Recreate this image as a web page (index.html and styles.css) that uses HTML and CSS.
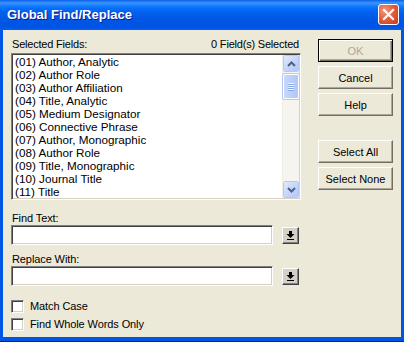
FILE: index.html
```html
<!DOCTYPE html>
<html lang="en">
<head>
  <meta charset="UTF-8" />
  <title>Global Find/Replace</title>
  <link rel="stylesheet" href="styles.css">
</head>
<body>
  <div class="window">
    <div class="titlebar">
      <span class="title">Global Find/Replace</span>
      <button class="close-btn" aria-label="Close">
        <svg width="13" height="13" viewBox="0 0 13 13">
          <path d="M2 2 L11 11 M11 2 L2 11" stroke="#fff" stroke-width="2.2" stroke-linecap="square"/>
        </svg>
      </button>
    </div>

    <div class="frame">
      <div class="content">
        <div class="left-col">
          <div class="list-header">
            <span>Selected Fields:</span>
            <span>0 Field(s) Selected</span>
          </div>

          <div class="listbox">
            <ul class="items">
              <li>(01) Author, Analytic</li>
              <li>(02) Author Role</li>
              <li>(03) Author Affiliation</li>
              <li>(04) Title, Analytic</li>
              <li>(05) Medium Designator</li>
              <li>(06) Connective Phrase</li>
              <li>(07) Author, Monographic</li>
              <li>(08) Author Role</li>
              <li>(09) Title, Monographic</li>
              <li>(10) Journal Title</li>
              <li>(11) Title</li>
            </ul>
            <div class="scrollbar">
              <div class="sb-btn">
                <svg width="9" height="6" viewBox="0 0 9 6"><polyline points="1,5 4.5,1.5 8,5" fill="none" stroke="#4d6185" stroke-width="2"/></svg>
              </div>
              <div class="sb-track">
                <div class="sb-thumb">
                  <span></span><span></span><span></span><span></span>
                </div>
              </div>
              <div class="sb-btn">
                <svg width="9" height="6" viewBox="0 0 9 6"><polyline points="1,1 4.5,4.5 8,1" fill="none" stroke="#4d6185" stroke-width="2"/></svg>
              </div>
            </div>
          </div>

          <label class="field-label">Find Text:</label>
          <div class="input-row">
            <div class="text-input"></div>
            <button class="drop-btn">
              <svg width="9" height="9" viewBox="0 0 9 9">
                <rect x="3" y="0" width="3" height="3" fill="#000"/>
                <polygon points="0.5,3 8.5,3 4.5,7" fill="#000"/>
                <rect x="1" y="8" width="7" height="1" fill="#000"/>
              </svg>
            </button>
          </div>

          <label class="field-label">Replace With:</label>
          <div class="input-row">
            <div class="text-input"></div>
            <button class="drop-btn">
              <svg width="9" height="9" viewBox="0 0 9 9">
                <rect x="3" y="0" width="3" height="3" fill="#000"/>
                <polygon points="0.5,3 8.5,3 4.5,7" fill="#000"/>
                <rect x="1" y="8" width="7" height="1" fill="#000"/>
              </svg>
            </button>
          </div>

          <div class="checks">
            <label class="check"><span class="box"></span>Match Case</label>
            <label class="check"><span class="box"></span>Find Whole Words Only</label>
          </div>
        </div>

        <div class="right-col">
          <button class="btn default" disabled>OK</button>
          <button class="btn">Cancel</button>
          <button class="btn">Help</button>
          <button class="btn spaced">Select All</button>
          <button class="btn">Select None</button>
        </div>
      </div>
    </div>
  </div>
</body>
</html>
```

FILE: styles.css
```css
* {
  margin: 0;
  padding: 0;
  box-sizing: border-box;
}

body {
  font-family: "Liberation Sans", Arial, sans-serif;
  font-size: 11px;
  color: #000;
  background: #ece9d8;
}

.window {
  width: 404px;
  height: 342px;
  display: flex;
  flex-direction: column;
  background: #0055e5;
}

/* title bar */
.titlebar {
  height: 30px;
  flex: none;
  display: flex;
  align-items: center;
  justify-content: space-between;
  padding: 0 5px 1px 7px;
  background: linear-gradient(180deg, #0a5fe8 0%, #3d95ff 10%, #1a80ff 18%, #046ffb 28%, #0260ee 42%, #0057e5 62%, #0054e3 86%, #0057ea 94%, #0464f4 100%);
}

.title {
  color: #fff;
  font-weight: bold;
  font-size: 13px;
  text-shadow: 1px 1px 0 #0a1e8c;
}

.close-btn {
  width: 21px;
  height: 21px;
  border: 1px solid #fff;
  border-radius: 3px;
  background: radial-gradient(circle at 30% 30%, #f09a80 0%, #e4603f 45%, #c8381a 100%);
  display: flex;
  align-items: center;
  justify-content: center;
}

/* frame around the client area */
.frame {
  flex: 1;
  display: flex;
  padding: 0 3px 4px 3px;
  background: #0055e5;
  border-bottom: 1px solid #001ea0;
}

.content {
  flex: 1;
  display: flex;
  gap: 17px;
  padding: 8px 8px 0 8px;
  background: #ece9d8;
}

.left-col {
  width: 290px;
  display: flex;
  flex-direction: column;
}

.list-header {
  display: flex;
  justify-content: space-between;
  line-height: 13px;
  letter-spacing: -0.2px;
  padding: 0 2px 0 1px;
  margin-bottom: 2px;
}

/* list box */
.listbox {
  height: 147px;
  display: flex;
  background: #fff;
  border: 1px solid;
  border-color: #808080 #fff #fff #808080;
  box-shadow: inset 1px 1px 0 #404040, inset -1px -1px 0 #d4d0c8;
  padding: 1px;
}

.items {
  flex: 1;
  list-style: none;
  padding-left: 2px;
  font-size: 11.7px;
  line-height: 13px;
  overflow: hidden;
}

.scrollbar {
  width: 17px;
  display: flex;
  flex-direction: column;
  background: #f5f4ef;
  border-left: 1px solid #eeede5;
}

.sb-btn {
  height: 17px;
  display: flex;
  align-items: center;
  justify-content: center;
  background: linear-gradient(135deg, #e1eafe 0%, #c1d3fb 60%, #b4c8f6 100%);
  border: 1px solid #fff;
  border-radius: 2px;
  outline: 1px solid #b6c9f4;
  outline-offset: -1px;
}

.sb-track {
  flex: 1;
  padding-top: 2px;
}

.sb-thumb {
  height: 25px;
  display: flex;
  flex-direction: column;
  align-items: center;
  justify-content: center;
  gap: 1px;
  background: linear-gradient(90deg, #c9d8fc 0%, #bccffb 50%, #b2c7f6 100%);
  border: 1px solid #fff;
  border-radius: 2px;
  box-shadow: 0 0 0 1px #b6c9f4;
}

.sb-thumb span {
  width: 6px;
  height: 1px;
  background: #eef3fe;
  box-shadow: 0 1px 0 #8caae6;
}

/* text inputs */
.field-label {
  line-height: 13px;
  letter-spacing: -0.1px;
  margin-top: 12px;
  padding-left: 1px;
}

.input-row + .field-label {
  margin-top: 8px;
}

.input-row {
  display: flex;
  align-items: center;
  gap: 9px;
}

.text-input {
  width: 262px;
  height: 20px;
  background: #fff;
  border: 1px solid;
  border-color: #808080 #fff #fff #808080;
  box-shadow: inset 1px 1px 0 #404040, inset -1px -1px 0 #d4d0c8;
}

.drop-btn {
  width: 17px;
  height: 17px;
  display: flex;
  align-items: center;
  justify-content: center;
  background: #d4d0c8;
  border: 1px solid;
  border-color: #fff #404040 #404040 #fff;
  box-shadow: inset -1px -1px 0 #808080;
}

/* checkboxes */
.checks {
  display: flex;
  flex-direction: column;
  gap: 5px;
  margin-top: 14px;
}

.check {
  display: flex;
  align-items: center;
  gap: 6px;
  height: 13px;
  line-height: 13px;
  letter-spacing: -0.1px;
}

.box {
  width: 13px;
  height: 13px;
  background: #fff;
  border: 1px solid;
  border-color: #808080 #fff #fff #808080;
  box-shadow: inset 1px 1px 0 #404040, inset -1px -1px 0 #d4d0c8;
}

/* push buttons */
.right-col {
  width: 75px;
  display: flex;
  flex-direction: column;
  gap: 4px;
  padding-top: 1px;
}

.btn {
  width: 75px;
  height: 23px;
  font-family: inherit;
  font-size: 11px;
  color: #000;
  background: #ece9d8;
  border: 1px solid;
  border-color: #fff #716f64 #716f64 #fff;
  box-shadow: inset -1px -1px 0 #aca899;
}

.btn.default {
  border: 1px solid #000;
  box-shadow: inset 1px 1px 0 #fff, inset -1px -1px 0 #716f64, inset -2px -2px 0 #aca899;
}

.btn:disabled {
  color: #aca899;
}

.btn.spaced {
  margin-top: 20px;
}
```
